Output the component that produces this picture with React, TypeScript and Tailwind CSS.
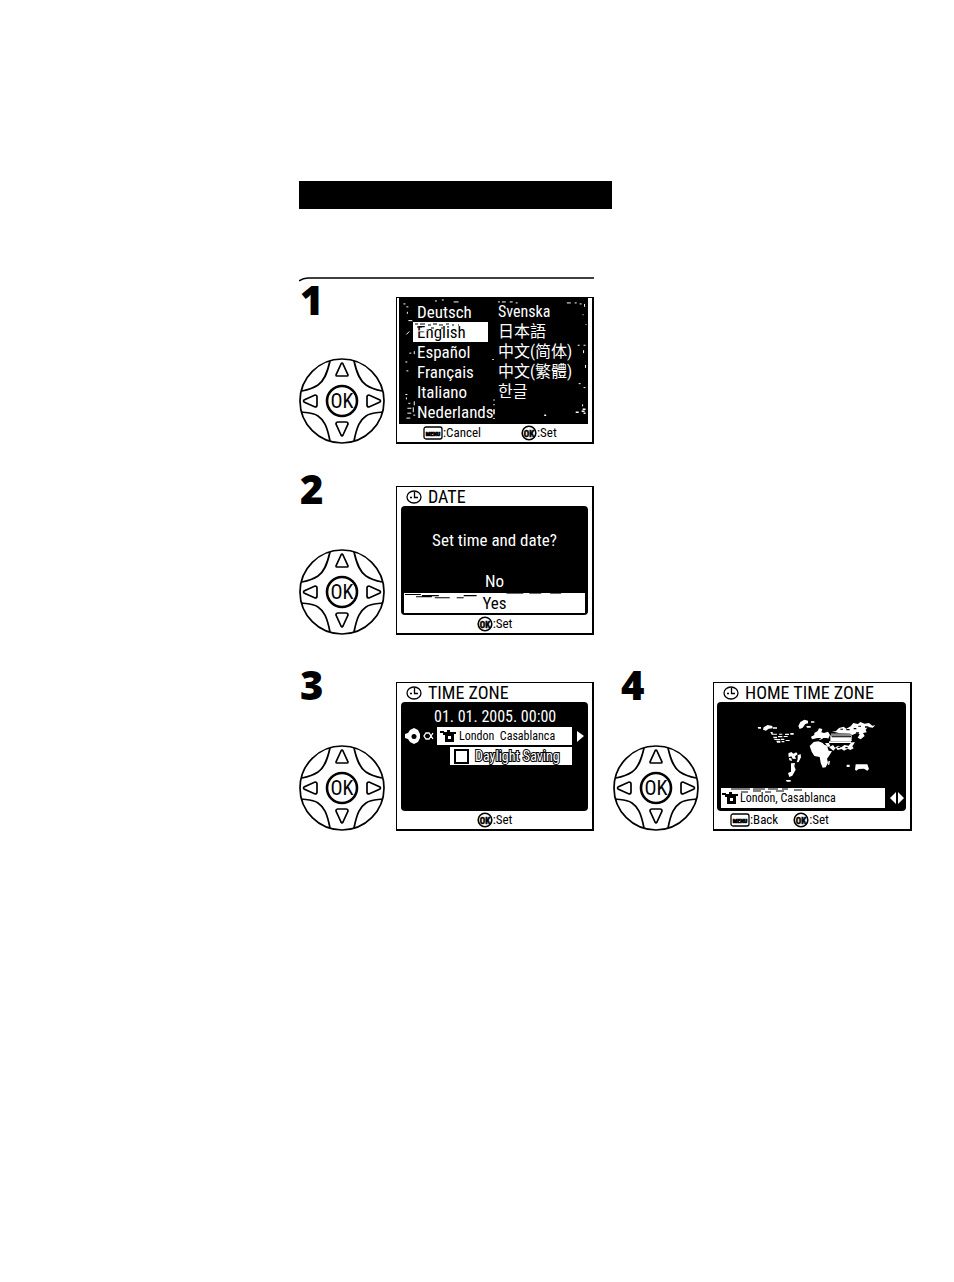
import React from 'react';

const languages = [
  ['Deutsch', 'Svenska'],
  ['English', '日本語'],
  ['Español', '中文(简体)'],
  ['Français', '中文(繁體)'],
  ['Italiano', '한글'],
  ['Nederlands', ''],
];

const ControlPad: React.FC = () => (
  <svg viewBox="0 0 86 86" className="w-[86px] h-[86px]" fill="none" stroke="black" strokeWidth="1.7" role="img" aria-label="Control pad">
    <circle cx="43" cy="43" r="42" />
    <path d="M31 3C28 16 25 23 19 27S8 32 3 33" />
    <path d="M55 3C58 16 61 23 67 27S78 32 83 33" />
    <path d="M31 83C28 68 25 62 19 58S8 55 2 54" />
    <path d="M55 83C58 68 61 62 67 58S78 55 84 54" />
    <circle cx="43" cy="43" r="15" strokeWidth="2.6" />
    <path d="M42 6Q43 4 44 6L49 17Q49 18 48 18H38Q37 18 37 17Z" />
    <path d="M42 77Q43 79 44 77L49 66Q49 64 47 64H39Q37 64 37 66Z" />
    <path d="M5 42Q4 43 5 44L16 49Q18 49 18 47V39Q18 37 16 37Z" />
    <path d="M81 42Q82 43 81 44L70 49Q68 49 68 47V39Q68 37 70 37Z" />
    <text
      x="43"
      y="50"
      textAnchor="middle"
      fill="black"
      stroke="none"
      className="text-[20px] font-['Roboto_Condensed','Liberation_Sans',sans-serif]"
    >
      OK
    </text>
  </svg>
);

const Clock: React.FC = () => (
  <svg viewBox="0 0 16 16" className="w-4 h-4 shrink-0" fill="none" stroke="black" strokeWidth="1.3">
    <ellipse cx="8" cy="8" rx="7" ry="6" />
    <path d="M8.500 3V8.500H12M4 8.500H6" />
  </svg>
);

const OkIcon: React.FC = () => (
  <svg viewBox="0 0 16 16" className="w-4 h-4 shrink-0">
    <circle cx="8" cy="8" r="6.800" fill="white" stroke="black" strokeWidth="1.600" />
    <text x="8" y="11.500" textAnchor="middle" className="text-[9px] font-bold font-['Roboto_Condensed','Liberation_Sans',sans-serif]" stroke="black" strokeWidth=".5">
      OK
    </text>
  </svg>
);

const MenuIcon: React.FC = () => (
  <svg viewBox="0 0 20 14" className="w-5 h-3.5 shrink-0">
    <rect x="1" y="1" width="18" height="12" rx="2" fill="white" stroke="black" strokeWidth="1.300" />
    <text x="10" y="9.500" textAnchor="middle" className="text-[6px] font-bold font-['Roboto_Condensed','Liberation_Sans',sans-serif]" stroke="black" strokeWidth=".7">
      MENU
    </text>
  </svg>
);

const House: React.FC = () => (
  <svg viewBox="0 0 17 13" className="w-[17px] h-[13px] shrink-0">
    <path d="M0 1H4V2H7V0H10V2H16V4H14V12H5V5H3V3H0Z" />
    <path d="M8 6H11V9H8Z" fill="white" />
  </svg>
);

const Footer: React.FC<{ children: React.ReactNode; className?: string }> = ({ children, className = 'justify-center' }) => (
  <div className={`h-[18px] flex items-center text-[13px] leading-4 ${className}`}>{children}</div>
);

const SetHint: React.FC = () => (
  <span className="flex items-center">
    <OkIcon />
    :Set
  </span>
);

const Screen: React.FC<{ title?: string; children: React.ReactNode }> = ({ title, children }) => (
  <div className="flex flex-col border border-black border-r-2 border-b-2 text-[17px] leading-5 font-['Roboto_Condensed','Liberation_Sans','Noto_Sans_CJK_SC',sans-serif]">
    {title && (
      <h2 className="h-[19px] pl-[9px] flex items-center gap-1.5 text-lg leading-5">
        <Clock />
        {title}
      </h2>
    )}
    {children}
  </div>
);

const Step: React.FC<{ number: number; children: React.ReactNode; wide?: boolean }> = ({ number, children, wide }) => (
  <div className="flex items-stretch">
    <div className={`flex flex-col justify-between ${wide ? 'w-[100px]' : 'w-[97px]'}`}>
      <span className={`h-7 text-[40px] leading-7 font-extrabold font-['Open_Sans',sans-serif] ${wide ? 'pl-2' : 'pl-px'}`}>{number}</span>
      <ControlPad />
    </div>
    <div className="flex-1 self-end pt-[11px]">{children}</div>
  </div>
);

const LanguageScreen: React.FC = () => (
  <Screen>
    <div className="relative h-[126px] ml-0.5 mr-1 pt-1 bg-black text-white">
      {/* Speckle along the panel edges */}
      <svg viewBox="0 0 191 128" className="absolute inset-0 w-full h-full" fill="none" stroke="white" strokeWidth="1">
        <path d="M4 6h2m1 3h2m-1 5v2m1 7h4m10 2h2m-15 9l-3 3m3 19h2m3-2v3m-9 8h2m-1 9h2m-3 24h2m-1 3v2m2 4h2m4-2v4m-7 3h4m2-1v5m-6 1h4m2 2h2m-9 3h4" />
        <path d="M36 3h2m5-1h2m10 2h5m40 0h2m2 0h4m4 0h3m3 1h2m50 0h4m4 0h2m3 1h2m3 0v3m-2 8h1m2 10h1m-3 21h2m-8 0h2m4 5v3m2 12v3m-7 16h2m3 4h2m-3 17v2" />
        <path d="M95 62v1m1 40v1m0 4v1m0 4v5m0 4v1m51-4h2m30-3h3m3-1h3m-2-2h3m-2 4h2" strokeWidth="1.500" />
      </svg>
      <div className="grid grid-cols-[77px_1fr] gap-x-2 pl-[14px]" role="listbox" aria-label="Language">
        {languages.map(([left, right]) => (
          <React.Fragment key={left}>
            <button
              role="option"
              aria-selected={left === 'English'}
              className={`relative h-5 w-[75px] pl-1 text-left leading-5 ${left === 'English' ? 'bg-white text-black' : ''}`}
            >
              {left}
              {left === 'English' && (
                <svg viewBox="0 0 75 20" className="absolute inset-0 w-full h-full" fill="none" stroke="black">
                  <path d="M2 2h3m2 0h5m3 1h3m2-1h4m2 1h4m3-1h3m3 1h2m4 0h1M4 5h5m9 1h3m7 0h2" />
                  <path d="M5 9h8m1-4v4m9 5h4" stroke="white" />
                </svg>
              )}
            </button>
            {right && (
              <button role="option" aria-selected={false} className="h-5 text-left text-base leading-5 whitespace-nowrap">
                {right}
              </button>
            )}
          </React.Fragment>
        ))}
      </div>
    </div>
    <Footer className="pl-[26px] gap-10">
      <span className="flex items-center">
        <MenuIcon />
        :Cancel
      </span>
      <SetHint />
    </Footer>
  </Screen>
);

const DateScreen: React.FC = () => (
  <Screen title="DATE">
    <div className="h-[109px] mx-1 px-[3px] pb-0.5 flex flex-col items-center bg-black text-white rounded-sm">
      <p className="pt-6">Set time and date?</p>
      <button className="mt-auto leading-5">No</button>
      <button className="relative mt-0.5 w-full h-5 bg-white text-black leading-5">
        Yes
        <svg viewBox="0 0 182 19" className="absolute inset-0 w-full h-full" preserveAspectRatio="none" fill="none" stroke="black">
          <path d="M1 1.500h16m1 1h17m-23 1h16m3 1h15m14-2h8m-8 2h-7m14-2h6" />
          <path d="M103 .5h17m6 0h12m9 0h11" strokeWidth=".6" />
        </svg>
      </button>
    </div>
    <Footer>
      <SetHint />
    </Footer>
  </Screen>
);

const TimeZoneScreen: React.FC = () => (
  <Screen title="TIME ZONE">
    <div className="h-[109px] mx-1 pt-[5px] bg-black text-white rounded-sm">
      <p className="pl-[33px] text-base leading-5 whitespace-nowrap">01. 01. 2005. 00:00</p>
      <div className="pl-1 flex items-center">
        <svg viewBox="0 0 32 18" className="w-8 h-[18px]">
          <path d="M0 7L3 6L5 3L9 1L13 3L15 7V11L13 15L9 17L5 15L3 12L0 11Z" fill="white" />
          <circle cx="9" cy="9.500" r="2.500" />
          <path d="M28 6L24 12H21L19 9L21 6H24L28 12" fill="none" stroke="white" strokeWidth="1.300" />
        </svg>
        <button className="w-[135px] h-[18px] pl-[3px] flex items-center gap-0.5 bg-white text-black text-xs leading-4 whitespace-pre">
          <House />
          London  Casablanca
        </button>
        <svg viewBox="0 0 8 12" className="ml-1 w-2 h-3">
          <path d="M1 1L8 6L1 12Z" fill="white" />
        </svg>
      </div>
      <label className="mt-0.5 ml-[49px] w-[122px] h-[18px] pl-1 flex items-center gap-1.5 bg-white text-sm leading-4">
        <input type="checkbox" className="appearance-none w-[15px] h-[15px] shrink-0 border-2 border-black bg-white" />
        <span className="text-white [-webkit-text-stroke:2px_black] [paint-order:stroke_fill] whitespace-nowrap">Daylight Saving</span>
      </label>
    </div>
    <Footer>
      <SetHint />
    </Footer>
  </Screen>
);

const WorldMap: React.FC = () => (
  <svg viewBox="150 130 372 198" className="ml-[38px] w-[124px] h-[66px]" fill="white" role="img" aria-label="World map">
    {/* Americas */}
    <path d="M158 157h10v5h-8zM176 158l12-7 14 3 1 7-12 1-8 6-9-3zM204 158h12v4h-12zM196 172h7v5h13v3h-16zM222 177h10v3h-10zM240 177h12v4h-12zM256 175h10v5h-10zM204 186h12v5h-10zM219 184h13v4h-13zM236 184h12v3h-12zM208 193h18v3h-18zM228 192h10v4h-10zM214 198h12v6h-10zM230 199h8v4h-8zM242 196h12v3h-12z" />
    <path d="M280 154l6-12 12-7 11 3v8l-8 2-8 11-9 4zM304 154h13v5h-11zM318 140h10v4h-10z" />
    <path d="M250 236l9-4 6 5 9-4 4 6-8 6 3 8-10-1-4-7-8 3zM278 242l9-4 1 10-7 14-6 1 3-10zM252 250l7 1 2 8-8-2zM258 266l12-1-2 10 4 10-10 18-9 4-4-12 9-4zM243 316h14v5h-12z" />
    {/* Europe and Africa */}
    <path d="M318 186l10-5v-6l10-6 4-8 10 2-3 10 8 2 12-4 6 10-6 12-14-2-10 5-8-6-16 4zM314 214l12-12 14-2 12 4 6 6 8 3 5 15 10 2-9 14-6 8 3 12-7 14-9 1-6-15-3-17-16-3-8-13zM370 260l5-2-2 12-4 1z" />
    {/* Asia */}
    <path d="M360 205h12l4 10-8 2zM372 218l12-7 6 8 9-6 10 5 9-7 13 2 8-10h11l-8 12 4 6-10 5-8-4-11 6-7-5-12 3-5-7-8 9zM372 205h66v-5h-66zM380 170h12l10-10 14-4 8 6 13-7 8-10 14 3 7-6 13 5 13-2 10 8 9-1-8 7-14-2-7 8 3 8-11 2 5 9-12 10-9-5 6-10-10-3-12 5-12-4-26-1zM376 182h64v17h-64z" />
    <path d="M380 184h58v4h-58zM406 162h8v3h-8zM424 163h10v4h-10zM446 160h8v4h-8zM460 153h8v3h-8zM480 155h10v4h-10zM453 173h9v4h-9z" fill="black" />
    <path d="M378 176h58v9h-58z" fill="#888" />
    <path d="M398 216h8v4h-8zM421 217h7v4h-7zM337 190h10v4h-10zM354 190h14v5h-14z" fill="black" />
    {/* Oceania */}
    <path d="M425 270h9v7h-9zM452 269h35l5 14-5 5-10-6-16 1-7 5-4-3z" />
  </svg>
);

const HomeTimeZoneScreen: React.FC = () => (
  <Screen title="HOME TIME ZONE">
    <div className="h-[109px] ml-[3px] mr-1 pt-4 pb-[3px] flex flex-col bg-black rounded-sm">
      <WorldMap />
      <div className="mt-auto pl-1 flex items-center">
        <button className="relative w-[164px] h-5 pl-px flex items-center gap-px bg-white text-xs leading-4 whitespace-nowrap">
          <House />
          London, Casablanca
          <svg viewBox="0 0 164 20" className="absolute inset-0 w-full h-full" fill="none" stroke="black">
            <path d="M10 1h19m3 0h12m3 0h10m4 0h6m6 1h8M20 4h7m5-1h8m4 1h6m5-1h8" />
          </svg>
        </button>
        <svg viewBox="0 0 14 12" className="ml-[5px] w-3.5 h-3">
          <path d="M0 6L6 0V12ZM8 0L14 6L8 12Z" fill="white" />
        </svg>
      </div>
    </div>
    <Footer className="pl-4 gap-[15px]">
      <span className="flex items-center">
        <MenuIcon />
        :Back
      </span>
      <SetHint />
    </Footer>
  </Screen>
);

export default function App() {
  return (
    <main className="min-h-screen bg-white text-black pt-[181px] pl-[299px] pr-10 pb-20">
      <header>
        <div className="h-7 max-w-[313px] bg-black" />
        <svg viewBox="0 0 295 10" className="mt-[67px] w-[295px] h-2.5" fill="none" stroke="black">
          <path d="M0 5Q4 2 9 2H295" strokeWidth="1.500" />
        </svg>
      </header>
      <ol className="grid grid-cols-[295px_299px] gap-x-[19px]">
        <li>
          <Step number={1}>
            <LanguageScreen />
          </Step>
        </li>
        <li className="col-start-1 mt-[31px] mb-9">
          <Step number={2}>
            <DateScreen />
          </Step>
        </li>
        <li className="col-start-1">
          <Step number={3}>
            <TimeZoneScreen />
          </Step>
        </li>
        <li>
          <Step number={4} wide>
            <HomeTimeZoneScreen />
          </Step>
        </li>
      </ol>
    </main>
  );
}
